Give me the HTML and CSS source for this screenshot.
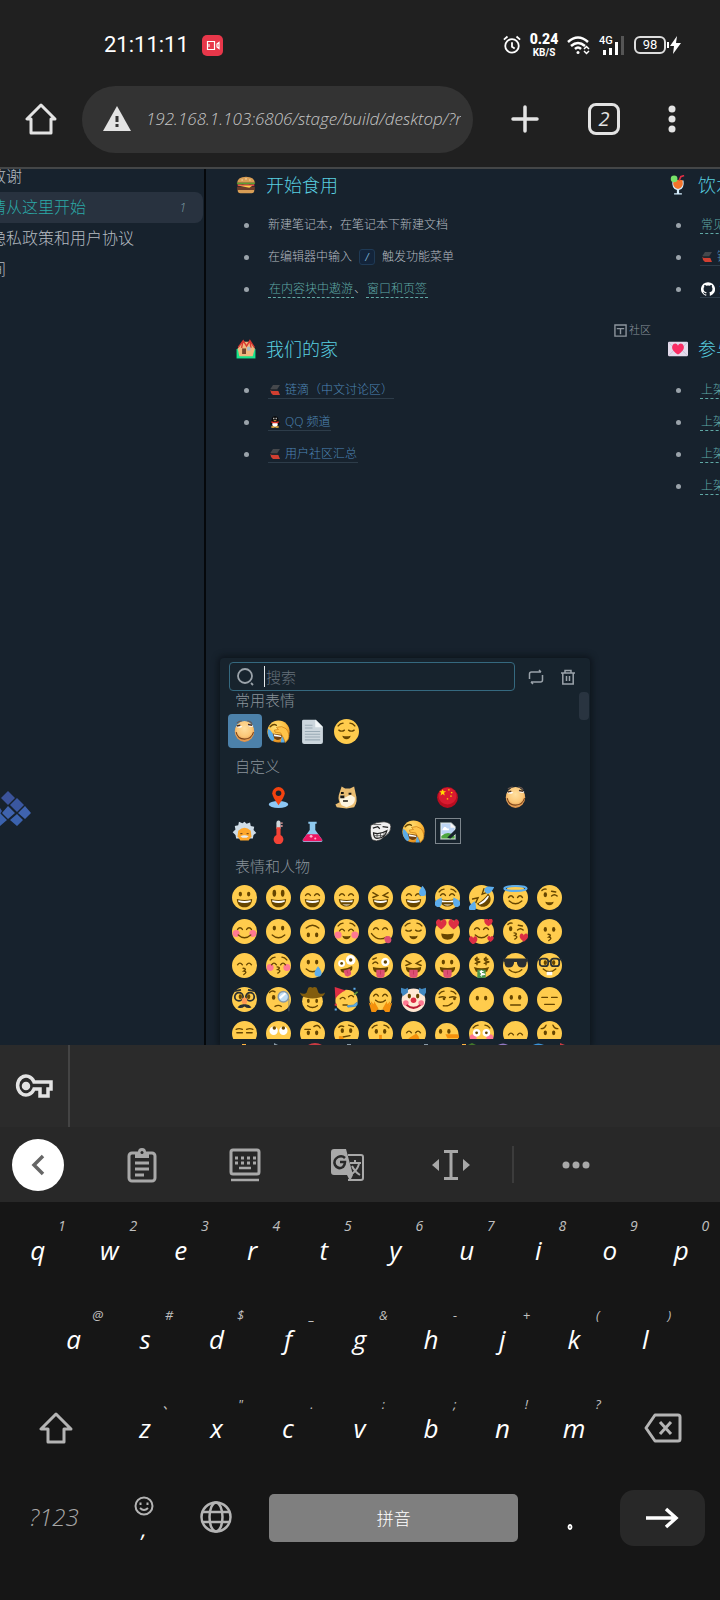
FILE: index.html
```html
<!DOCTYPE html>
<html lang="zh-CN">
<head>
<meta charset="utf-8">
<meta name="viewport" content="width=device-width, initial-scale=1">
<title>思源笔记</title>
<link rel="stylesheet" href="styles.css">
</head>
<body>
<svg class="defs" aria-hidden="true">
  <defs>
    <circle id="f" cx="18" cy="18" r="18" fill="#ffcc4d"/>
    <g id="ed" fill="#664500"><ellipse cx="12" cy="13" rx="2.4" ry="3.4"/><ellipse cx="24" cy="13" rx="2.4" ry="3.4"/></g>
    <g id="et" fill="#664500"><ellipse cx="12" cy="12" rx="2.6" ry="5"/><ellipse cx="24" cy="12" rx="2.6" ry="5"/></g>
    <path id="es" class="ln" d="M8 15q3.500-5 7 0M21 15q3.500-5 7 0"/>
    <path id="ec" class="ln" d="M7 16q4 3 8 0M21 16q4 3 8 0"/>
    <path id="el" class="ln" d="M7 15h8M21 15h8"/>
    <path id="ex" class="ln" d="M7 11l7 4-7 3M29 11l-7 4 7 3"/>
    <path id="br" class="ln" d="M6 10q3-4 7-4M30 10q-3-4-7-4"/>
    <g id="mg"><path fill="#664500" d="M7 20q11 3 22 0c0 7-4 12-11 12S7 27 7 20z"/><path fill="#fff" d="M9 22q9 2 18 0v2q-9 4-18 0z"/></g>
    <g id="mb"><path fill="#664500" d="M7 20q11 3 22 0c0 6-4 11-11 11S7 26 7 20z"/><path fill="#fff" d="M9 22q9 2 18 0c0 2-1 3-1 3H10zM12 28h12q-6 3-12 0z"/></g>
    <path id="ms" class="ln" d="M9 23q9 8 18 0"/>
    <path id="mq" fill="#664500" d="M12 24q6 2 12 0-1 5-6 5t-6-5z"/>
    <path id="mk" class="ln" d="M16 20q6 1 1 4 6 1 0 5"/>
    <g id="mt"><path fill="#664500" d="M7 20q11 3 22 0c0 5-2 7-5 8H12c-3-1-5-3-5-8z"/><path fill="#dd4f72" d="M12 24h12v7q0 5-6 5t-6-5z"/><path stroke="#bb2f52" d="M18 25v6"/></g>
    <g id="ck" fill="#ff7892"><circle cx="6" cy="21" r="5"/><circle cx="30" cy="21" r="5"/></g>
    <path id="ht" fill="#dd2e44" d="M0 7C-6 3-9-1-7-5S-1-8 0-4C1-8 5-9 7-5S6 3 0 7z"/>
    <path id="tr" fill="#5dadec" d="M0-7c3 4 5 7 5 10a5 5 0 0 1-10 0c0-3 2-6 5-10z"/>
    <radialGradient id="skin" cx=".5" cy=".35" r=".65"><stop offset="0" stop-color="#ffe0a0"/><stop offset=".6" stop-color="#fbc778"/><stop offset="1" stop-color="#d98b45"/></radialGradient>
    <radialGradient id="amber" cx=".4" cy=".3" r=".75"><stop offset="0" stop-color="#ffe27a"/><stop offset=".6" stop-color="#fdbb3c"/><stop offset="1" stop-color="#d97f16"/></radialGradient>
    <g id="grin-ball">
      <ellipse cx="18" cy="18" rx="14" ry="15" fill="url(#skin)"/>
      <path fill="#fff" d="M6 11q4-3 9 0-4 3-9 0M22 9q5-2 9 1-4 3-9-1"/>
      <path d="M7 10l5-1M23 8l6 1" stroke="#4b3020" stroke-width="2" fill="none"/>
      <path d="M7 6q3-3 7-3M22 3q5 0 7 4" stroke="#6d5a50" stroke-width="1.500" fill="none"/>
      <path d="M6 19q2 10 12 10t13-10" fill="none" stroke="#7a4218" stroke-width="1.500"/>
    </g>
    <g id="cry-ball">
      <circle cx="18" cy="18" r="16" fill="url(#amber)"/>
      <path d="M6 11q5-5 9-2" class="ln"/>
      <path fill="#70400f" d="M9 21l15 2q-2 8-9 7-6-2-6-9z"/><path fill="#fff" d="M11 22l11 2v2l-10-1z"/>
      <path fill="#5aabe6" d="M3 14q7 3 9 16l-3 2Q1 26 3 14M23 25q5 1 4 9h-6z"/>
      <path fill="#ffc44a" stroke="#c87913" d="M15 12q8-3 14 2 6 8 3 15l-4 5-3-7-4-7-8-1-1-3 6-1z"/>
    </g>
    <g id="book"><path fill="#45484c" d="M12 3h21l-8 12H4z"/><path fill="#292d32" d="M4 15h21l2 5H8z"/><path fill="#d23f31" d="M4 17l4 4h20l5 12H12Q4 28 4 17z"/></g>
  </defs>
</svg>

<header class="status">
  <time class="clock">21:11:11</time>
  <svg class="rec" viewBox="0 0 21 21"><rect width="21" height="21" rx="5" fill="#e8374a"/><path d="M5.500 6.500h7v8h-7zM15 9l2-1.500v6L15 12z" fill="none" stroke="#fff" stroke-width="1.200"/><path d="M7 9v3" stroke="#fff"/></svg>
  <div class="status-right">
    <svg width="18" height="20" viewBox="0 0 20 22" fill="none" stroke="#fff" stroke-width="2"><circle cx="10" cy="12" r="7.500"/><path d="M10 8v5l3 2M1 5l4-3.500M19 5l-4-3.500"/></svg>
    <div class="speed"><b>0.24</b><span>KB/S</span></div>
    <svg width="24" height="20" viewBox="0 0 24 20" fill="none" stroke="#fff" stroke-width="2.500"><path d="M1 7Q11-2 21 7M4 11q7-6 14 0M8 14q3-3 6 0"/><circle cx="11" cy="17.500" r="1.500" fill="#fff" stroke="none"/><path d="M17 14l2.500-2.500L22 14M17 16l2.500 2.500L22 16" stroke-width="1.500"/></svg>
    <div class="signal"><span>4G</span><svg width="26" height="20" viewBox="0 0 26 20"><path fill="#fff" d="M4 15h3v5H4zM10 13h3v7h-3zM16 7h3v13h-3z"/><path fill="#555" d="M22 1h3v19h-3z"/></svg></div>
    <div class="battery"><span>98</span></div>
    <svg width="14" height="18" viewBox="0 0 14 18"><path fill="#fff" d="M0 6h2v6H0zM10 0L3 10h4l-1 8 8-11H9z"/></svg>
  </div>
</header>

<nav class="browser">
  <button class="ib" aria-label="主页"><svg width="32" height="32" viewBox="0 0 32 32" fill="none" stroke="#e3e3e3" stroke-width="3" stroke-linejoin="round"><path d="M16 2L2 16h4v14h20V16h4z"/></svg></button>
  <div class="omnibox">
    <svg width="28" height="26" viewBox="0 0 28 26"><path fill="#e3e3e3" d="M14 0l14 25H0z"/><path stroke="#333" stroke-width="3" d="M14 10v6M14 18v3"/></svg>
    <input aria-label="网址" value="192.168.1.103:6806/stage/build/desktop/?r">
  </div>
  <button class="ib plus" aria-label="新标签页"><svg width="28" height="28" viewBox="0 0 28 28"><path stroke="#e3e3e3" stroke-width="3.500" stroke-linecap="round" d="M14 2v24M2 14h24"/></svg></button>
  <button class="tabs">2</button>
  <button class="ib more" aria-label="更多"><svg width="8" height="28" viewBox="0 0 8 28" fill="#e3e3e3"><circle cx="4" cy="4" r="3.500"/><circle cx="4" cy="14" r="3.500"/><circle cx="4" cy="24" r="3.500"/></svg></button>
</nav>

<main class="app">
  <aside class="tree">
    <ul>
      <li>致谢</li>
      <li class="current">请从这里开始<span class="count">1</span></li>
      <li>隐私政策和用户协议</li>
      <li>间</li>
    </ul>
    <svg class="logo" width="31" height="36" viewBox="0 0 31 36"><g fill="#3a57a0"><path fill="#3b539a" d="M8 0l7 7-7 7-7-7z"/><path d="M17 7l7 7-7 7-7-7z"/><path fill="#3f63ae" d="M25 15l6 7-6 6-7-6zM8 15l7 7-7 6-6-6z"/><path fill="#3b62ad" d="M17 23l6 6-6 6-7-6zM0 22l7 7-7 6z"/><path d="M0 17l2 3-2 3z"/></g></svg>
  </aside>

  <article class="doc">
    <div class="columns">
      <section>
        <h2><svg viewBox="0 0 36 36"><path fill="#d99e55" d="M2 14Q3 3 18 3t16 11z"/><path fill="#fff0c5" d="M10 8h2v2h-2zM17 6h2v2h-2zM24 8h2v2h-2z"/><path fill="#5c9e31" d="M1 14h34l-3 4-7-1-6 2-7-2-8 2z"/><path fill="#dd2e44" d="M3 17h30v3H3z"/><path fill="#6b3d2a" d="M2 21h32v6H2z"/><path fill="#ffcc4d" d="M3 19h27l-6 4z"/><path fill="#d99e55" d="M3 27h30q0 6-5 6H8q-5 0-5-6z"/></svg>开始食用</h2>
        <ul>
          <li>新建笔记本，在笔记本下新建文档</li>
          <li>在编辑器中输入<code>/</code>触发功能菜单</li>
          <li><a href="#" class="ref">在内容块中遨游</a>、<a href="#" class="ref">窗口和页签</a></li>
        </ul>
      </section>
      <section>
        <h2><svg viewBox="0 0 36 36"><path fill="#d6efff" d="M8 10h20q2 15-8 17v6h5v2H11v-2h5v-6Q6 25 8 10z"/><path fill="#f4742b" d="M10 9h16q3 15-8 16-11-1-8-16z"/><path d="M20 10l3-7 6-2" stroke="#dd2e44" stroke-width="3" fill="none"/><circle cx="11" cy="7" r="6" fill="#77e36a"/></svg>饮水思源</h2>
        <ul>
          <li><a href="#" class="ref">常见问题</a></li>
          <li><a href="#" class="ext"><svg viewBox="0 0 36 36"><use href="#book"/></svg>链滴社区</a></li>
          <li><a href="#" class="ext"><svg class="gh" viewBox="0 0 24 24"><path fill="#fff" d="M12 .3a12 12 0 0 0-3.800 23.400c.6.100.8-.3.800-.6v-2c-3.300.7-4-1.600-4-1.600-.6-1.400-1.400-1.800-1.400-1.800-1-.7.100-.7.100-.7 1.200.1 1.900 1.200 1.900 1.200 1 1.800 2.800 1.300 3.500 1 .1-.8.400-1.300.7-1.600-2.600-.3-5.400-1.300-5.400-5.900 0-1.300.5-2.400 1.200-3.200 0-.4-.5-1.600.2-3.200 0 0 1-.3 3.300 1.200a11 11 0 0 1 6 0c2.300-1.500 3.300-1.200 3.300-1.200.7 1.600.2 2.800.1 3.200.8.800 1.200 1.900 1.200 3.200 0 4.600-2.800 5.600-5.400 5.900.4.400.8 1.100.8 2.200v3.300c0 .3.200.7.800.6A12 12 0 0 0 12 .3"/></svg>源码仓库</a></li>
        </ul>
      </section>
      <section>
        <p class="tag"><svg width="13" height="13" viewBox="0 0 14 14"><path d="M1 1h12v12H1zM3 5h8M7 5v6" fill="none" stroke="#8d959d" stroke-width="1.500"/></svg>社区</p>
        <h2><svg viewBox="0 0 36 36"><path fill="#17e58b" d="M1 18h34v17H1z"/><path fill="#f0b77e" d="M3 17L12 5h14l8 12-4 14H6z"/><path d="M4 15L13 3l6 10 6-10 8 12M13 3l-3 13M25 3l2 13" fill="none" stroke="#d93a32" stroke-width="2.500"/><path fill="#76442d" d="M11 17h7v10h-7z"/><path fill="#aebcc5" d="M20 14h6v7h-6z"/></svg>我们的家</h2>
        <ul>
          <li><a href="#" class="ext"><svg viewBox="0 0 36 36"><use href="#book"/></svg>链滴（中文讨论区）</a></li>
          <li><a href="#" class="ext"><svg viewBox="0 0 36 36"><path fill="#080808" d="M18 1q10 0 10 12l5 12-5 2-3 6H11l-3-6-5-2 5-12Q8 1 18 1z"/><ellipse cx="18" cy="25" rx="8" ry="8" fill="#fff"/><path fill="#fff" d="M13 5h3v5h-3zM20 5h3v5h-3z"/><path fill="#f6b63e" d="M12 12h12l-6 3zM7 31h10v4H7zM19 31h10v4H19z"/><path fill="#e4352c" d="M7 16q11 4 22 0v4q-11 4-22 0z"/></svg>QQ 频道</a></li>
          <li><a href="#" class="ext"><svg viewBox="0 0 36 36"><use href="#book"/></svg>用户社区汇总</a></li>
        </ul>
      </section>
      <section>
        <h2><svg viewBox="0 0 36 36"><rect y="5" width="36" height="26" rx="2" fill="#e4dcec"/><path d="M1 6l12 12L1 30M35 6L23 18l12 12" stroke="#b9a9c9" fill="none"/><path fill="#fb2d64" d="M18 28C9 22 6 17 8 12s8-5 10 0c2-5 8-5 10 0s-1 10-10 16z"/></svg>参与贡献</h2>
        <ul>
          <li><a href="#" class="ref">上架主题</a></li>
          <li><a href="#" class="ref">上架图标</a></li>
          <li><a href="#" class="ref">上架挂件</a></li>
          <li><a href="#" class="ref">上架模板</a></li>
        </ul>
      </section>
    </div>

    <div class="picker">
      <div class="picker-bar">
        <label class="search">
          <svg width="18" height="18" viewBox="0 0 18 18" fill="none" stroke="#9ba3aa" stroke-width="1.800"><circle cx="8" cy="8" r="7"/><path d="M14 15l2 2"/></svg>
          <input aria-label="搜索表情" placeholder="搜索">
        </label>
        <button aria-label="随机"><svg width="16" height="16" viewBox="0 0 16 16" fill="none" stroke="#9ba3aa" stroke-width="1.500"><path d="M1.500 10V5q0-2 2-2H13M11 1l2 2M14.500 6v5q0 2-2 2H3M5 15l-2-2"/></svg></button>
        <button aria-label="删除"><svg width="16" height="16" viewBox="0 0 16 16" fill="none" stroke="#9ba3aa" stroke-width="1.500"><path d="M1 4h14M5 4V1.500h6V4M2.800 4v11h10.400V4M6.500 7v5M9.500 7v5"/></svg></button>
      </div>
      <div class="list">
        <h3>常用表情</h3>
        <div class="grid">
          <button class="on" aria-label="滑稽"><svg viewBox="0 0 36 36"><use href="#grin-ball"/></svg></button>
          <button aria-label="笑哭"><svg viewBox="0 0 36 36"><use href="#cry-ball"/></svg></button>
          <button aria-label="文档"><svg viewBox="0 0 36 36"><path fill="#ccd6dd" d="M5 1h18l10 10v22q0 3-3 3H6q-3 0-3-3V3q0-2 2-2z"/><path fill="#f2f6f8" d="M22 1l11 11H22z"/><path stroke="#99aab5" stroke-width="1.600" d="M7 9h11M7 13h11M7 18h22M7 22h22M7 26h22M7 30h22"/></svg></button>
          <button aria-label="如释重负"><svg viewBox="0 0 36 36"><use href="#f"/><use href="#br"/><use href="#ec"/><use href="#mq"/></svg></button>
        </div>
        <h3>自定义</h3>
        <div class="grid">
          <span></span>
          <button aria-label="位置"><svg viewBox="0 0 36 36"><ellipse cx="18" cy="28" rx="14" ry="5" fill="#8cc7f5"/><path fill="#f2420f" d="M18 29Q9 17 9 12a9 9 0 0 1 18 0q0 5-9 17z"/><circle cx="18" cy="12" r="4" fill="#17222d"/></svg></button>
          <span></span>
          <button aria-label="柴犬"><svg viewBox="0 0 36 36"><path fill="#eabd72" d="M8 11l3-9 5 3h7l6-3 2 10q4 12-2 20l-11 2-14-2-2-4 6-3q-3-7 0-14z"/><path fill="#fff5df" d="M9 15q6-1 7 3l8-4 6 4q1 8-5 11l-7 3-7-3q-4-6-2-14z"/><path fill="#19150f" d="M9 15h6v4H9zM10 10h4v3h-4zM21 11h4v3h-4zM13 22h7v2h-7z"/></svg></button>
          <span></span><span></span>
          <button aria-label="中国"><svg viewBox="0 0 36 36"><circle cx="18" cy="18" r="15" fill="#b80d20"/><ellipse cx="18" cy="16" rx="13" ry="12" fill="#d91b30"/><path fill="#ffde00" d="M11 6l1.500 3H16l-3 2 1 4-3-2-3 2 1-4-3-2h3.500zM19 6h2v2h-2zM23 10h2v2h-2zM22 15h2v2h-2zM17 19h2v2h-2z"/></svg></button>
          <span></span>
          <button aria-label="滑稽"><svg viewBox="0 0 36 36"><use href="#grin-ball"/></svg></button>
          <span></span>
          <button aria-label="科学家"><svg viewBox="0 0 36 36"><path fill="#cfdce6" d="M18 4l3 3 5-2 1 5 5 1-1 5 4 4-4 3-1 5H6l-1-5-4-4 4-4-1-5 5-1 1-5 5 2z"/><path fill="#ffa72b" d="M9 17q9-9 18 0l1 8-4 6H12l-4-6z"/><path fill="#e8ecef" d="M12 25q6-3 12 0l-3 2h-6z"/><path fill="#835018" d="M12 20h3v2h-3zM21 20h3v2h-3z"/></svg></button>
          <button aria-label="温度计"><svg viewBox="0 0 36 36"><path fill="#cfd8dc" d="M15 6q0-4 3-4t3 4v8h-6z"/><path fill="#f44336" d="M15 12h6v11a7 7 0 1 1-6 0z"/><path stroke="#f4a3a0" stroke-width="2" d="M21 6h3M21 10h3"/></svg></button>
          <button aria-label="烧瓶"><svg viewBox="0 0 36 36"><path fill="#8ec9ef" d="M12 4h12v3h-2v9l10 14q1 3-2 3H6q-3 0-2-3l10-14V7h-2z"/><path fill="#ed1561" d="M10 22h16l6 8q0 2-2 2H6q-2 0-2-2z"/><circle cx="16" cy="25" r="2" fill="#ffb2d0"/><circle cx="22" cy="28" r="1.500" fill="#ffb2d0"/></svg></button>
          <span></span>
          <button aria-label="坏笑"><svg viewBox="0 0 36 36"><path fill="#f0f0f0" stroke="#222" d="M4 9q8-5 19-5 10 1 10 7 0 7-6 12l-9 7q-6 3-12 0-4-8-2-21z"/><path d="M7 13l7-2 3 3M21 11l8 1M8 20q9 3 19-3-2 10-14 11-5-1-5-8z" fill="none" stroke="#222" stroke-width="1.800"/><path d="M13 21v6M18 20v6M23 19v5M8 8h11M9 24h15" stroke="#333"/></svg></button>
          <button aria-label="笑哭"><svg viewBox="0 0 36 36"><use href="#cry-ball"/></svg></button>
          <button class="missing" aria-label="图片"><svg viewBox="0 0 24 24"><path fill="#f5f5f5" stroke="#899" d="M3 2h13l5 5v15H3z"/><path fill="#bcd5f4" d="M4 3h11v5h5v8H4z"/><path fill="#fff" d="M6 9q2-4 5 0h2v2H5z"/><path fill="#4da53f" d="M4 18q8-7 16 0v3H4z"/><path fill="#17222d" d="M22 9L11 20l4 1 8-7z"/></svg></button>
        </div>
        <h3>表情和人物</h3>
        <div class="grid">
          <button aria-label="嘿嘿"><svg viewBox="0 0 36 36"><use href="#f"/><use href="#ed"/><use href="#mg"/></svg></button>
          <button aria-label="哈哈"><svg viewBox="0 0 36 36"><use href="#f"/><use href="#et"/><use href="#mg"/></svg></button>
          <button aria-label="大笑"><svg viewBox="0 0 36 36"><use href="#f"/><use href="#es"/><use href="#mg"/></svg></button>
          <button aria-label="嘻嘻"><svg viewBox="0 0 36 36"><use href="#f"/><use href="#es"/><use href="#mb"/></svg></button>
          <button aria-label="斜眼笑"><svg viewBox="0 0 36 36"><use href="#f"/><use href="#ex"/><use href="#mg"/></svg></button>
          <button aria-label="苦笑"><svg viewBox="0 0 36 36"><use href="#f"/><use href="#es"/><use href="#mg"/><use href="#tr" x="31" y="8"/></svg></button>
          <button aria-label="笑哭"><svg viewBox="0 0 36 36"><use href="#f"/><use href="#br"/><use href="#es"/><use href="#mb"/><use href="#tr" transform="translate(6 24) rotate(30)"/><use href="#tr" transform="translate(30 24) rotate(-30)"/></svg></button>
          <button aria-label="笑得满地打滚"><svg viewBox="0 0 36 36"><use href="#f"/><g transform="rotate(-42 18 18)"><use href="#ex"/><use href="#mg"/></g><use href="#tr" transform="translate(30 6) rotate(65)"/><use href="#tr" transform="translate(6 30) rotate(20)"/></svg></button>
          <button aria-label="微笑天使"><svg viewBox="0 0 36 36"><use href="#f"/><use href="#es" y="3"/><use href="#ms"/><ellipse cx="18" cy="5" rx="16" ry="3.500" fill="none" stroke="#5dadec" stroke-width="3"/></svg></button>
          <button aria-label="眨眼"><svg viewBox="0 0 36 36"><use href="#f"/><ellipse cx="12" cy="14" rx="2.500" ry="3.500" fill="#664500"/><path class="ln" d="M7 8q3-3 6-2M21 16q4-4 8 0M21 9l6 1"/><use href="#mq"/></svg></button>

          <button aria-label="羞涩微笑"><svg viewBox="0 0 36 36"><use href="#f"/><use href="#ck"/><use href="#es"/><use href="#ms"/></svg></button>
          <button aria-label="呵呵"><svg viewBox="0 0 36 36"><use href="#f"/><use href="#ed"/><use href="#ms"/></svg></button>
          <button aria-label="倒脸"><svg viewBox="0 0 36 36"><g transform="rotate(180 18 18)"><use href="#f"/><use href="#ed"/><use href="#ms"/></g></svg></button>
          <button aria-label="微笑"><svg viewBox="0 0 36 36"><use href="#f"/><use href="#ck" y="2"/><use href="#br"/><use href="#es" y="2"/><use href="#mq"/></svg></button>
          <button aria-label="好吃"><svg viewBox="0 0 36 36"><use href="#f"/><use href="#es"/><path class="ln" d="M5 21q9 12 22 5"/><path fill="#dd4f72" d="M23 28q3-5 8-3 4 3 2 8-4 4-8 0z"/></svg></button>
          <button aria-label="松了口气"><svg viewBox="0 0 36 36"><use href="#f"/><use href="#br"/><use href="#ec"/><use href="#mq"/></svg></button>
          <button aria-label="花痴"><svg viewBox="0 0 36 36"><use href="#f"/><use href="#ht" x="9" y="8"/><use href="#ht" x="27" y="8"/><path fill="#664500" d="M9 21q9 2 18 0 0 9-9 9t-9-9z"/></svg></button>
          <button aria-label="喜笑颜开"><svg viewBox="0 0 36 36"><use href="#f"/><use href="#es"/><use href="#ms"/><use href="#ht" transform="translate(28 5) scale(.8)"/><use href="#ht" transform="translate(6 31) scale(.8)"/><use href="#ht" transform="translate(31 29) scale(.6)"/></svg></button>
          <button aria-label="飞吻"><svg viewBox="0 0 36 36"><use href="#f"/><ellipse cx="11" cy="14" rx="2.500" ry="3.500" fill="#664500"/><path class="ln" d="M7 8q3-3 6-2M21 16q4-4 8 0M22 9l6 1"/><use href="#mk"/><use href="#ht" transform="translate(30 27) scale(.8)"/></svg></button>
          <button aria-label="亲亲"><svg viewBox="0 0 36 36"><use href="#f"/><use href="#ed" y="2"/><use href="#mk" y="2"/></svg></button>

          <button aria-label="微笑亲亲"><svg viewBox="0 0 36 36"><use href="#f"/><use href="#es" y="2"/><use href="#mk" y="2"/></svg></button>
          <button aria-label="羞涩亲亲"><svg viewBox="0 0 36 36"><use href="#f"/><use href="#ck"/><use href="#br"/><use href="#es" y="2"/><use href="#mk"/></svg></button>
          <button aria-label="含泪的笑脸"><svg viewBox="0 0 36 36"><use href="#f"/><use href="#ed"/><use href="#ms"/><use href="#tr" x="26" y="26"/></svg></button>
          <button aria-label="滑稽脸"><svg viewBox="0 0 36 36"><use href="#f"/><g fill="#fff"><circle cx="11" cy="15" r="5"/><circle cx="24" cy="10" r="7"/></g><g fill="#664500"><circle cx="11" cy="15" r="2"/><circle cx="24" cy="10" r="2.500"/></g><g transform="rotate(-15 18 24) translate(4 5) scale(.8)"><use href="#mt"/></g></svg></button>
          <button aria-label="眨眼吐舌"><svg viewBox="0 0 36 36"><use href="#f"/><path class="ln" d="M7 15q4-4 7 0M7 9l5-2"/><circle cx="25" cy="13" r="6" fill="#fff"/><circle cx="25" cy="13" r="2.500" fill="#664500"/><use href="#mt"/></svg></button>
          <button aria-label="眯眼吐舌"><svg viewBox="0 0 36 36"><use href="#f"/><use href="#ex"/><use href="#mt"/></svg></button>
          <button aria-label="吐舌"><svg viewBox="0 0 36 36"><use href="#f"/><use href="#ed"/><use href="#mt"/></svg></button>
          <button aria-label="发财"><svg viewBox="0 0 36 36"><use href="#f"/><path class="ln" d="M14 9q-5-2-5 0t5 3-5 3M11.500 6v11M27 9q-5-2-5 0t5 3-5 3M24.500 6v11"/><path fill="#664500" d="M7 20q11 4 22 0l-3 7H10z"/><path fill="#4b954d" d="M12 24h12v12H12z"/><path d="M21 27q-5-2-5 0t5 3-5 2M18 25v9" fill="none" stroke="#fff" stroke-width="1.500"/></svg></button>
          <button aria-label="墨镜"><svg viewBox="0 0 36 36"><use href="#f"/><path fill="#292f33" d="M0 8h36v3l-2 2q0 8-6 8-8 0-8-8h-4q0 8-8 8-6 0-6-8l-2-2z"/><use href="#ms" y="1"/></svg></button>
          <button aria-label="书呆子"><svg viewBox="0 0 36 36"><use href="#f"/><use href="#ed" y="1"/><g fill="none" stroke="#292f33" stroke-width="2.500"><rect x="4" y="8" width="12" height="11" rx="4"/><rect x="20" y="8" width="12" height="11" rx="4"/><path d="M0 10l4-1M16 12h4M32 9l4 1"/></g><use href="#ms"/><path fill="#fff" d="M14 27h8v5h-8z"/></svg></button>

          <button aria-label="伪装的脸"><svg viewBox="0 0 36 36"><use href="#f"/><use href="#ed" y="1"/><g fill="none" stroke="#292f33" stroke-width="2.500"><circle cx="10" cy="14" r="6"/><circle cx="26" cy="14" r="6"/><path d="M3 6l10-2M33 6L23 4"/></g><ellipse cx="18" cy="20" rx="4" ry="5" fill="#ff9a55"/><path fill="#292f33" d="M18 25q6-1 10 4-5 3-10-1-5 4-10 1 4-5 10-4z"/></svg></button>
          <button aria-label="带单片眼镜的脸"><svg viewBox="0 0 36 36"><use href="#f"/><ellipse cx="11" cy="15" rx="2.500" ry="3.500" fill="#664500"/><path class="ln" d="M5 8q4-4 8-1M13 28q5-3 9 0"/><circle cx="25" cy="14" r="7.500" fill="#bdddf4" stroke="#8899a6" stroke-width="2"/><path d="M20 16l8-7" stroke="#fff" stroke-width="3"/><path d="M33 17v18" stroke="#66757f"/></svg></button>
          <button aria-label="牛仔"><svg viewBox="0 0 36 36"><circle cx="18" cy="21" r="15" fill="#ffcc4d"/><path fill="#825d0e" d="M0 8q4 3 9 1l3-8q3-2 6 0 3-2 6 0l3 8q5 2 9-1-1 6-8 7-10 3-20 0-7-1-8-7z"/><ellipse cx="12" cy="20" rx="2" ry="3" fill="#664500"/><ellipse cx="24" cy="20" rx="2" ry="3" fill="#664500"/><path class="ln" d="M11 27q7 5 14 0"/></svg></button>
          <button aria-label="聚会笑脸"><svg viewBox="0 0 36 36"><circle cx="18" cy="20" r="16" fill="#ffcc4d"/><path fill="#dd2e44" d="M1 0l16 5Q8 8 2 17z"/><path class="ln" d="M9 17q4-4 7 0M21 14q4-4 7 0M13 26h6"/><path d="M19 27l9-1 5-4q2 5-3 6l-10 1z" fill="#5dadec" stroke="#3b88c3"/><path stroke="#5c913b" stroke-width="2.500" d="M29 11l5-4"/><path fill="#5dadec" d="M28 1h3v3h-3zM1 31h3v3H1z"/><path fill="#dd2e44" d="M1 24h3v3H1z"/></svg></button>
          <button aria-label="抱抱"><svg viewBox="0 0 36 36"><circle cx="18" cy="17" r="16" fill="#ffcc4d"/><use href="#es" y="-2"/><path class="ln" d="M11 19q7 6 14 0"/><path fill="#f4900c" d="M1 22l4 4-1-6 4 5 1-4 6 10-4 5H5zM35 22l-4 4 1-6-4 5-1-4-6 10 4 5h6z"/></svg></button>
          <button aria-label="小丑"><svg viewBox="0 0 36 36"><circle cx="18" cy="19" r="17" fill="#ffe8d4"/><path fill="#4289c1" d="M0 1l6 2 4-2v7l-7 5-3-5zM36 1l-6 2-4-2v7l7 5 3-5z"/><use href="#ed"/><circle cx="18" cy="19" r="4" fill="#dd2e44"/><circle cx="7" cy="23" r="4" fill="#ff7892"/><circle cx="29" cy="23" r="4" fill="#ff7892"/><path fill="none" stroke="#bb1a34" stroke-width="3" d="M8 26q10 8 20 0"/></svg></button>
          <button aria-label="得意"><svg viewBox="0 0 36 36"><use href="#f"/><use href="#br"/><path class="ln" d="M6 15q5-2 9 0M21 15q5-2 9 0M12 27q8 1 13-4"/><circle cx="13" cy="17" r="2" fill="#664500"/><circle cx="28" cy="17" r="2" fill="#664500"/></svg></button>
          <button aria-label="沉默"><svg viewBox="0 0 36 36"><use href="#f"/><use href="#ed" y="3"/></svg></button>
          <button aria-label="冷漠"><svg viewBox="0 0 36 36"><use href="#f"/><use href="#ed" y="2"/><path class="ln" d="M11 26h14"/></svg></button>
          <button aria-label="无语"><svg viewBox="0 0 36 36"><use href="#f"/><use href="#el"/><path class="ln" d="M11 25h14"/></svg></button>

          <button aria-label="不高兴"><svg viewBox="0 0 36 36"><use href="#f"/><path class="ln" d="M6 12q4-2 9 0M21 12q5-2 9 0M7 17h8M21 17h8"/></svg></button>
          <button aria-label="翻白眼"><svg viewBox="0 0 36 36"><use href="#f"/><circle cx="11" cy="14" r="6" fill="#fff"/><circle cx="25" cy="14" r="6" fill="#fff"/><circle cx="12" cy="10" r="2.500" fill="#664500"/><circle cx="25" cy="10" r="2.500" fill="#664500"/></svg></button>
          <button aria-label="挑眉"><svg viewBox="0 0 36 36"><use href="#f"/><use href="#ed" y="4"/><path class="ln" d="M7 12h8M20 8q6-4 9 2"/></svg></button>
          <button aria-label="想一想"><svg viewBox="0 0 36 36"><use href="#f"/><use href="#ed" y="1"/><path class="ln" d="M7 9q3-3 7-1M21 6l7 2M13 23l10-2"/><path fill="#f4900c" d="M7 22q5-2 7 3l-7 9z"/></svg></button>
          <button aria-label="安静的脸"><svg viewBox="0 0 36 36"><use href="#f"/><use href="#br"/><use href="#ed" y="2"/><path fill="#f4900c" d="M16 20h4v16h-4z"/></svg></button>
          <button aria-label="不说"><svg viewBox="0 0 36 36"><use href="#f"/><use href="#es" y="2"/><path fill="#f4900c" d="M11 25l11-7 3 4 2 5-8 8h-7z"/></svg></button>
          <button aria-label="说谎"><svg viewBox="0 0 36 36"><circle cx="17" cy="20" r="17" fill="#ffcc4d"/><use href="#ed" x="-4" y="2"/><path fill="#f4900c" d="M15 19h17q4 2 2 6H18z"/></svg></button>
          <button aria-label="脸红"><svg viewBox="0 0 36 36"><use href="#f"/><use href="#ck" y="3"/><use href="#br"/><circle cx="11" cy="17" r="5.500" fill="#fff"/><circle cx="25" cy="17" r="5.500" fill="#fff"/><circle cx="11" cy="17" r="2" fill="#664500"/><circle cx="25" cy="17" r="2" fill="#664500"/></svg></button>
          <button aria-label="失望"><svg viewBox="0 0 36 36"><use href="#f"/><use href="#es" y="5"/></svg></button>
          <button aria-label="担心"><svg viewBox="0 0 36 36"><use href="#f"/><use href="#ed" y="4"/><path class="ln" d="M6 11q5 0 7-5M30 11q-5 0-7-5"/></svg></button>
        </div>
      </div>
      <svg class="peek" viewBox="0 0 338 6" aria-hidden="true"><path fill="#ffb340" d="M14 5h4v1h-4zM234 5h4v1h-4z"/><path fill="#8899a6" d="M46 4l4 2h-4zM119 5h4v1h-4zM196 5h4v1h-4z"/><path fill="#c93a42" d="M80 6q7-4 14 0zM332 4l5 2h-5z"/><path fill="#41782b" d="M240 6l4-2 4 2z"/><path fill="#9278c2" d="M270 6q5-3 10 0z"/><path fill="#3b94d9" d="M305 6q5-3 11 0z"/></svg>
      <div class="thumb"></div>
    </div>
  </article>
</main>

<footer class="keyboard">
  <div class="autofill"><button aria-label="密码"><svg width="38" height="28" viewBox="0 0 38 28" fill="none" stroke="#e3e3e3" stroke-width="3.500"><path d="M19 10h17v7h-3v7h-8v-7h-6a8.500 9.500 0 1 1 0-7z"/><circle cx="11" cy="14" r="2.500" fill="#e3e3e3"/></svg></button></div>
  <div class="tools">
    <button class="back" aria-label="返回"><svg width="14" height="22" viewBox="0 0 14 22"><path d="M12 2L3 11l9 9" fill="none" stroke="#666" stroke-width="3.500"/></svg></button>
    <button aria-label="剪贴板"><svg width="30" height="36" viewBox="0 0 30 36"><rect x="2" y="6" width="26" height="28" rx="3" fill="none" stroke="#a8a8a8" stroke-width="3"/><path fill="#a8a8a8" d="M8 5h3a4 4 0 0 1 8 0h3v6H8z"/><circle cx="15" cy="5.500" r="1.500" fill="#282828"/><path stroke="#a8a8a8" stroke-width="3" d="M8 16h14M8 22h14M8 28h9"/></svg></button>
    <button aria-label="键盘模式"><svg width="32" height="36" viewBox="0 0 32 36"><rect x="2" y="3" width="28" height="24" rx="2" fill="none" stroke="#a8a8a8" stroke-width="3"/><path stroke="#a8a8a8" stroke-width="3" stroke-dasharray="3 3" d="M6 11h21M6 16h21"/><path stroke="#a8a8a8" stroke-width="2.500" d="M10 21h12M2 33h28"/></svg></button>
    <button aria-label="翻译"><svg width="34" height="36" viewBox="0 0 34 36"><path d="M17 8h13q2 0 2 2v21q0 2-2 2H17" fill="none" stroke="#a8a8a8" stroke-width="2"/><path fill="#a8a8a8" d="M3 2h12l7 26-3 6-3-6H3q-3 0-3-3V5q0-3 3-3z"/><path fill="none" stroke="#282828" stroke-width="2.500" d="M14 11q-3-3-7-1-5 3-3 8 3 5 8 2 2-2 2-5H9"/><path fill="none" stroke="#a8a8a8" stroke-width="2" d="M19 16h11M24 13v3M28 17q-2 7-9 11M21 19q3 6 8 9"/></svg></button>
    <button aria-label="文字编辑"><svg width="38" height="32" viewBox="0 0 38 32"><path fill="#a8a8a8" d="M0 16l7-6v12zM38 16l-7-6v12z"/><path stroke="#a8a8a8" stroke-width="3" d="M12 2.500h14M12 29.500h14M19 2v28"/></svg></button>
    <i class="rule"></i>
    <button aria-label="更多工具"><svg width="28" height="8" viewBox="0 0 28 8" fill="#a8a8a8"><circle cx="4" cy="4" r="3.500"/><circle cx="14" cy="4" r="3.500"/><circle cx="24" cy="4" r="3.500"/></svg></button>
  </div>
  <div class="keys">
    <div class="row r1">
      <button><sup>1</sup><b>q</b></button><button><sup>2</sup><b>w</b></button><button><sup>3</sup><b>e</b></button><button><sup>4</sup><b>r</b></button><button><sup>5</sup><b>t</b></button><button><sup>6</sup><b>y</b></button><button><sup>7</sup><b>u</b></button><button><sup>8</sup><b>i</b></button><button><sup>9</sup><b>o</b></button><button><sup>0</sup><b>p</b></button>
    </div>
    <div class="row r2">
      <button><sup>@</sup><b>a</b></button><button><sup>#</sup><b>s</b></button><button><sup>$</sup><b>d</b></button><button><sup>_</sup><b>f</b></button><button><sup>&amp;</sup><b>g</b></button><button><sup>-</sup><b>h</b></button><button><sup>+</sup><b>j</b></button><button><sup>(</sup><b>k</b></button><button><sup>)</sup><b>l</b></button>
    </div>
    <div class="row r3">
      <button class="ic" aria-label="切换大小写"><svg width="34" height="34" viewBox="0 0 34 34"><path d="M17 3L2 18h7v13h16V18h7z" fill="none" stroke="#b4b4b4" stroke-width="3" stroke-linejoin="round"/></svg></button><button><sup>、</sup><b>z</b></button><button><sup>"</sup><b>x</b></button><button><sup>.</sup><b>c</b></button><button><sup>:</sup><b>v</b></button><button><sup>;</sup><b>b</b></button><button><sup>!</sup><b>n</b></button><button><sup>?</sup><b>m</b></button><button class="ic" aria-label="退格"><svg width="38" height="30" viewBox="0 0 38 30" fill="none" stroke="#b4b4b4" stroke-width="3" stroke-linejoin="round"><path d="M11 2h23q2 0 2 2v22q0 2-2 2H11L2 15z"/><path d="M16 9l11 12M27 9L16 21"/></svg></button>
    </div>
    <div class="row r4">
      <button class="sym">?123</button>
      <button class="comma" aria-label="逗号"><svg width="20" height="20" viewBox="0 0 20 20" fill="none" stroke="#b4b4b4" stroke-width="2"><circle cx="10" cy="10" r="8.500"/><path d="M6 12q4 4 8 0M6.500 6.500v2.500M13.500 6.500v2.500"/></svg><b>,</b></button>
      <button class="ic" aria-label="切换语言"><svg width="32" height="32" viewBox="0 0 32 32" fill="none" stroke="#b4b4b4" stroke-width="2.500"><circle cx="16" cy="16" r="14.500"/><ellipse cx="16" cy="16" rx="6.500" ry="14.500"/><path d="M3 11h26M3 21h26"/></svg></button>
      <button class="space">拼音</button>
      <button class="dot" aria-label="句号"><svg width="8" height="9" viewBox="0 0 8 9"><ellipse cx="4" cy="5" rx="1.500" ry="2" fill="none" stroke="#fff" stroke-width="1.800"/></svg></button>
      <button class="enter" aria-label="前往"><svg width="34" height="22" viewBox="0 0 34 22" fill="none" stroke="#fff" stroke-width="3.500"><path d="M1 11h30M21 2l10 9-10 9"/></svg></button>
    </div>
  </div>
</footer>
</body>
</html>
```
FILE: styles.css
```css
* { box-sizing: border-box; }
body {
  margin: 0;
  min-height: 100vh;
  display: flex;
  flex-direction: column;
  overflow: hidden;
  background: #202020;
  color: #b5bbc1;
  font-family: "Open Sans", "Noto Sans CJK SC", sans-serif;
  font-weight: 300;
}
button { border: 0; padding: 0; margin: 0; background: none; color: inherit; font: inherit; }
svg { display: block; flex: none; }
ul, h2, h3, p { margin: 0; padding: 0; list-style: none; font-weight: 300; }
.defs { position: absolute; width: 0; height: 0; }
.ln { fill: none; stroke: #664500; stroke-width: 2; stroke-linecap: round; }

.status {
  display: flex;
  align-items: center;
  height: 70px;
  padding: 20px 39px 0 104px;
  color: #fff;
  font-family: Roboto, sans-serif;
}
.clock { font-size: 22px; line-height: 28px; font-weight: 400; }
.rec { width: 21px; height: 21px; margin-left: 13px; }
.status-right { display: flex; align-items: center; gap: 8px; margin-left: auto; }
.speed { display: grid; justify-items: center; width: 30px; font-size: 10px; line-height: 11px; font-weight: 700; }
.speed b { font-size: 14px; line-height: 15px; }
.signal { display: grid; width: 27px; }
.signal > * { grid-area: 1 / 1; }
.signal span { font-size: 11px; line-height: 12px; font-weight: 500; }
.battery {
  width: 32px;
  height: 18px;
  border: 2px solid #ddd;
  border-radius: 6px;
  font-size: 13px;
  line-height: 14px;
  font-weight: 400;
  text-align: center;
}
.battery + svg { margin-left: -7px; }

.browser {
  display: flex;
  align-items: center;
  height: 99px;
  padding: 1px 44px 0 25px;
  border-bottom: 2px solid #444647;
}
.omnibox {
  flex: 1;
  display: flex;
  align-items: center;
  gap: 15px;
  min-width: 0;
  height: 67px;
  margin-left: 25px;
  padding: 0 12px 0 21px;
  border-radius: 34px;
  background: #333;
}
.omnibox input {
  flex: 1;
  min-width: 0;
  padding: 0;
  border: 0;
  background: none;
  color: #c6c6c6;
  font: italic 300 17px/24px "Open Sans", sans-serif;
}
.plus { margin-left: 38px; }
.tabs {
  width: 32px;
  height: 32px;
  margin: 0 48px 0 49px;
  border: 3px solid #e3e3e3;
  border-radius: 8px;
  color: #e3e3e3;
  font: italic 400 20px/26px "Open Sans", sans-serif;
}

.app { flex: 1; display: flex; min-height: 0; overflow: hidden; background: #17222d; }
.tree {
  display: flex;
  flex-direction: column;
  flex: none;
  width: 206px;
  overflow: hidden;
  border-right: 2px solid #05080b;
}
.tree ul { margin: -8px 1px 0 -16px; }
.tree li { display: flex; height: 31px; padding: 0 17px 0 6px; font-size: 16px; line-height: 31px; white-space: nowrap; }
.tree .current { border-radius: 8px; background: #28323f; color: #2ba9a7; }
.count { margin-left: auto; color: #7f9fa5; font-size: 12px; font-style: italic; }
.logo { margin-top: auto; margin-bottom: 218px; }

.doc { flex: 1; position: relative; min-width: 0; overflow: hidden; }
.columns { display: grid; grid-template-columns: 432px 432px; padding-left: 30px; }
.columns section { position: relative; display: flex; flex-direction: column; }
.columns section:nth-child(n+3) { margin-top: 28px; }
.columns h2 { display: flex; align-items: center; gap: 10px; height: 32px; color: #59d0e0; font-size: 18px; line-height: 32px; }
.columns h2 svg { width: 20px; height: 20px; }
.columns ul { padding: 8px 0 0; }
.columns section:nth-child(n+3) ul { padding-top: 9px; }
.columns li { display: flex; align-items: center; height: 32px; padding-left: 8px; font-size: 12px; line-height: 16px; white-space: nowrap; }
.columns li::before { content: ""; width: 5px; height: 5px; margin-right: 19px; border-radius: 50%; background: #9aa3aa; }
.columns a { display: flex; align-items: center; gap: 4px; padding: 0 1px; text-decoration: none; }
.columns a svg { width: 12px; height: 12px; }
.columns a .gh { width: 14px; height: 14px; }
.ref { color: #5fa8a5; border-bottom: 1px dashed #5fa8a5; }
.ext { color: #4e86b5; border-bottom: 1px solid #2d3c49; }
.columns code {
  width: 16px;
  height: 16px;
  margin: 0 7px;
  border: 1px solid #1f3a55;
  border-radius: 3px;
  background: #13243a;
  color: #7fb2d0;
  font: italic 10px/14px "Open Sans", sans-serif;
  text-align: center;
}
.tag { position: absolute; right: 17px; top: -11px; display: flex; align-items: center; gap: 2px; color: #8d959d; font-size: 11px; line-height: 16px; }

.picker {
  position: absolute;
  left: 14px;
  top: 489px;
  bottom: 0;
  display: flex;
  flex-direction: column;
  width: 370px;
  padding: 4px 8px 0;
  border-radius: 4px 4px 0 0;
  background: #17232d;
  box-shadow: 0 0 6px 2px #0d141b;
}
.picker-bar { display: flex; align-items: center; gap: 16px; padding-right: 6px; }
.search {
  flex: 1;
  display: flex;
  align-items: center;
  gap: 9px;
  height: 29px;
  margin: 0 -3px 0 1px;
  padding-left: 7px;
  border: 1px solid #35697f;
  border-radius: 4px;
}
.search input {
  flex: 1;
  min-width: 0;
  height: 21px;
  padding: 0 0 0 1px;
  border: 0;
  border-left: 1px solid #e5e9ec;
  background: none;
  font: 300 15px/20px "Noto Sans CJK SC", sans-serif;
}
.search input::placeholder { color: #66717b; }
.list { flex: 1; min-height: 0; overflow: hidden; }
.list h3 { height: 20px; margin-bottom: 3px; padding-left: 7px; color: #8a939b; font-size: 15px; line-height: 18px; }
.grid { display: grid; grid-template-columns: repeat(10, 1fr); grid-auto-rows: 34px; width: 338px; margin-bottom: 9px; }
.grid button { display: grid; place-items: center; border-radius: 4px; }
.grid button svg { width: 25px; height: 25px; }
.grid .on { background: #4c81aa; }
.grid .missing { width: 26px; height: 26px; place-self: center; border: 1px solid #7c858c; border-radius: 0; }
.grid .missing svg { width: 20px; height: 20px; }
.peek { width: 338px; height: 6px; }
.thumb { position: absolute; right: 1px; top: 34px; width: 10px; height: 28px; border-radius: 4px; background: #293440; }

.keyboard { background: #161616; color: #fff; }
.autofill { height: 82px; background: #2b2b2b; }
.autofill button { display: grid; place-items: center; width: 70px; height: 100%; border-right: 2px solid #444; }
.tools { display: flex; align-items: center; height: 75px; padding-left: 12px; background: #282828; }
.tools button { display: grid; place-items: center; width: 103px; height: 52px; }
.tools .back { width: 52px; margin-right: 26px; border-radius: 50%; background: #fff; }
.rule { width: 2px; height: 37px; margin: 0 10px; background: #3c3c3c; }
.keys { padding-bottom: 41px; }
.row { display: grid; height: 89px; }
.r1 { grid-template-columns: repeat(10, 1fr); padding: 0 3px 0 2px; }
.r2 { grid-template-columns: repeat(9, 1fr); padding: 0 39px 0 38px; }
.r3 { grid-template-columns: 3fr repeat(7, 2fr) 3fr; padding: 0 3px 0 2px; }
.r4 { grid-template-columns: 15fr 10fr 10fr 37fr 13fr 15fr; height: 90px; align-items: center; }
.row button { display: flex; flex-direction: column; align-items: center; padding-top: 15px; }
.row sup { width: 100%; padding-left: 48px; color: #c0c0c0; font: italic 400 14px/18px "Open Sans", "Noto Sans CJK SC", sans-serif; text-align: center; }
.row b { font: italic 400 26px/30px "Open Sans", sans-serif; }
.r2 sup, .r3 sup { font-size: 13px; }
.row .ic { justify-content: center; padding: 6px 0 0; }
.row .sym { padding: 6px 0 0; color: #a8a8a8; font: italic 300 24px/32px "Open Sans", sans-serif; }
.row .comma { gap: 2px; padding: 6px 0 0; }
.row .comma b { font-size: 22px; line-height: 20px; }
.row .space {
  justify-content: center;
  height: 48px;
  margin: 8px 0 0 17px;
  padding: 0;
  border-radius: 5px;
  background: #7f7f7f;
  font: 300 17px/24px "Noto Sans CJK SC", sans-serif;
}
.row .dot { padding: 24px 0 0 10px; }
.row .enter { justify-content: center; height: 56px; margin: 8px 15px 0 8px; padding: 0; border-radius: 14px; background: #282828; }
```
